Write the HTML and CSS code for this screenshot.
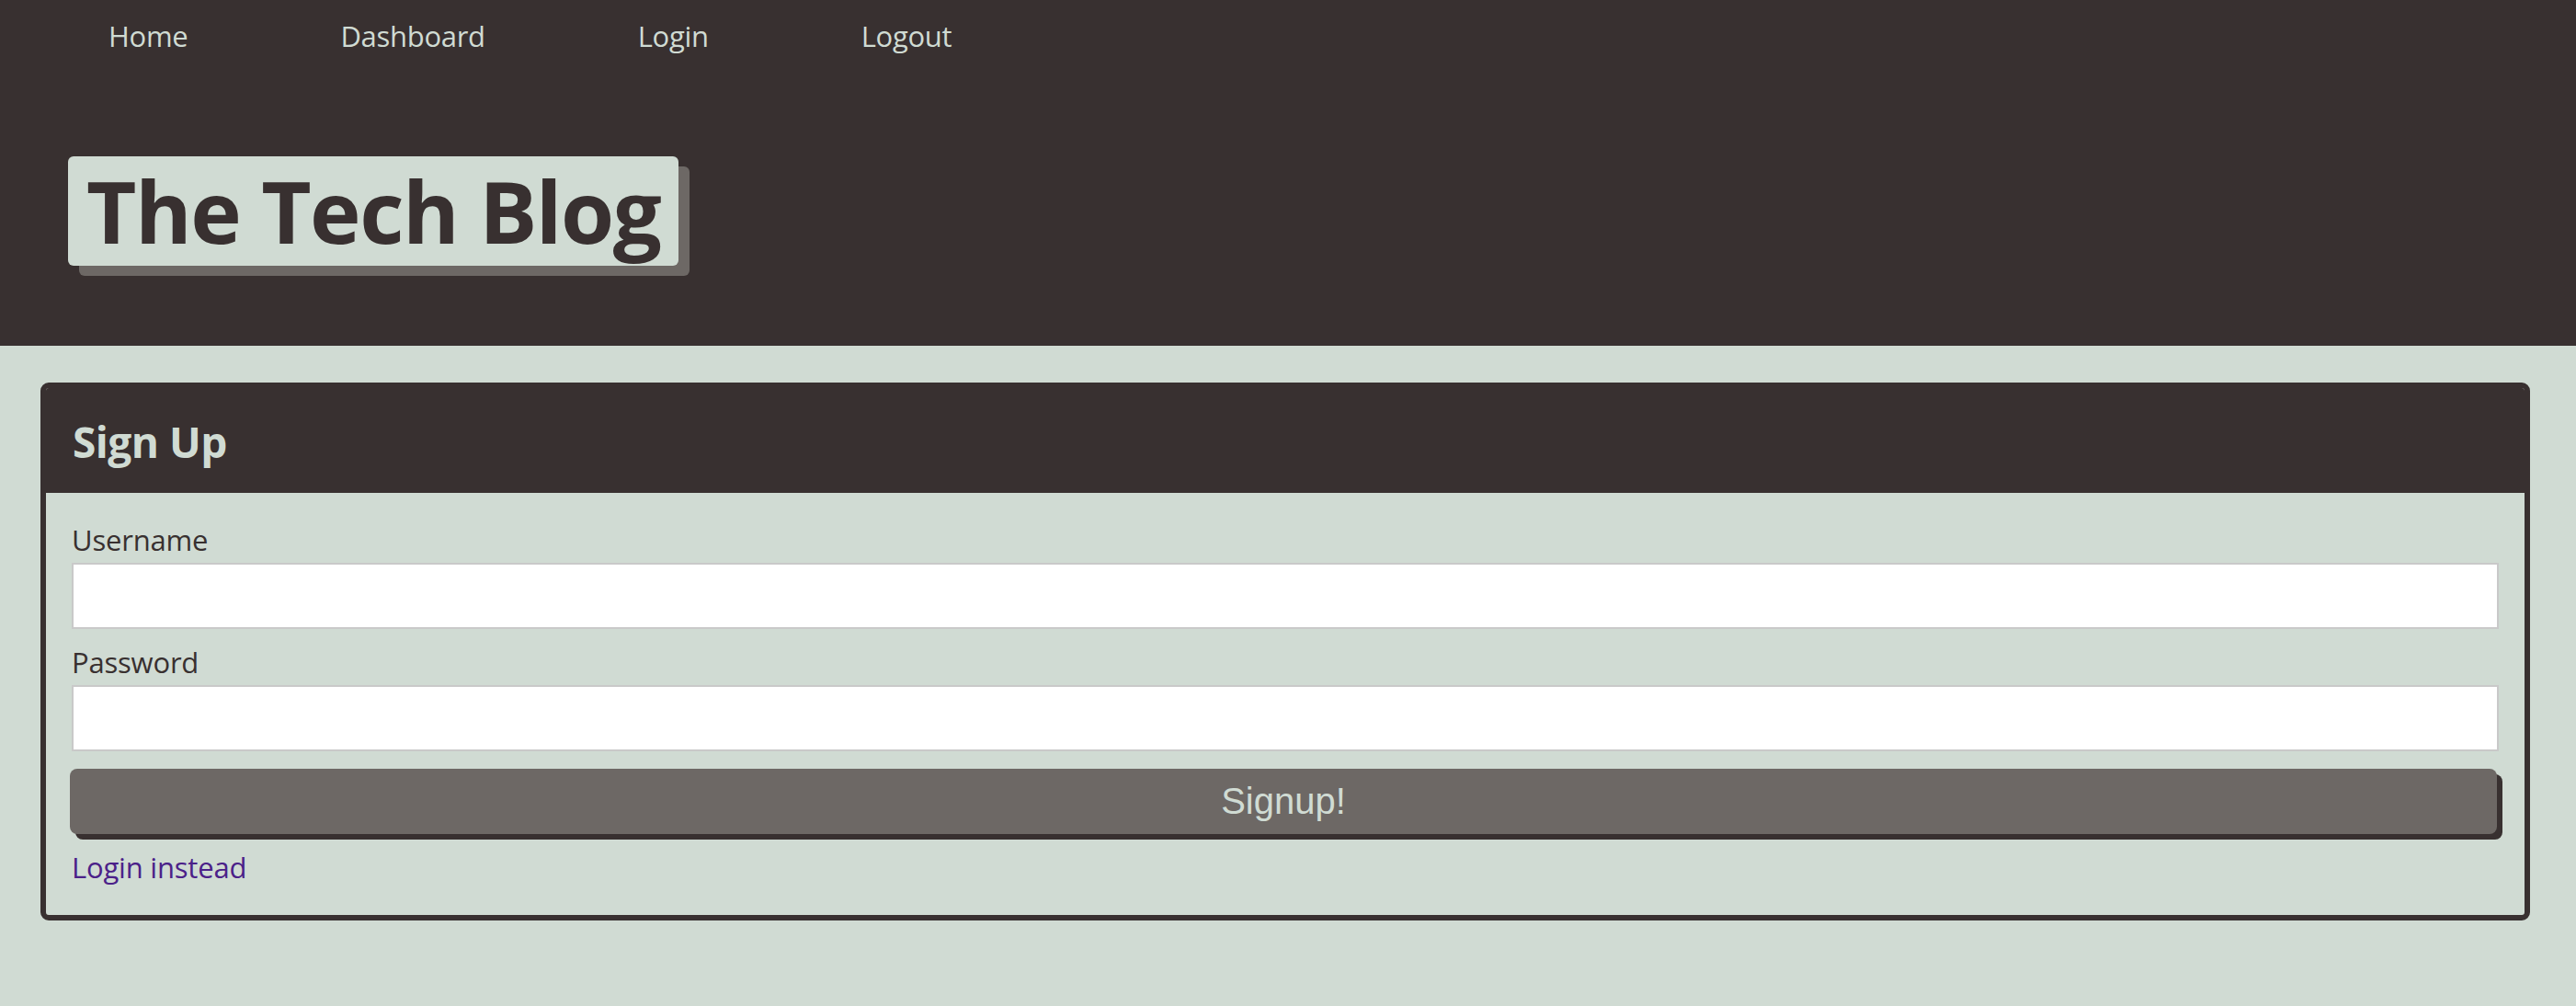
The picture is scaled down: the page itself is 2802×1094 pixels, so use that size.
FILE: index.html
```html
<!DOCTYPE html>
<html lang="en">
<head>
<meta charset="utf-8">
<title>The Tech Blog</title>
<link rel="stylesheet" href="styles.css">
</head>
<body>
<header class="site-header">
  <nav class="nav">
    <a class="nav-link" href="#">Home</a>
    <a class="nav-link" href="#">Dashboard</a>
    <a class="nav-link" href="#">Login</a>
    <a class="nav-link" href="#">Logout</a>
  </nav>
  <div class="brand-row">
    <h1 class="brand">The Tech Blog</h1>
  </div>
</header>
<main class="main">
  <section class="card">
    <div class="card-header">
      <h2 class="card-title">Sign Up</h2>
    </div>
    <form class="card-body">
      <label class="field-label" for="username">Username</label>
      <input class="field-input" id="username" type="text">
      <label class="field-label field-label-next" for="password">Password</label>
      <input class="field-input" id="password" type="password">
      <button class="submit-btn" type="button">Signup!</button>
      <a class="alt-link" href="#">Login instead</a>
    </form>
  </section>
</main>
</body>
</html>
```

FILE: styles.css
```css
* {
  box-sizing: border-box;
}

html, body {
  margin: 0;
  padding: 0;
}

body {
  background: #d0dbd3;
  font-family: "Open Sans", "Noto Sans", sans-serif;
  color: #383030;
  min-height: 1094px;
}

.site-header {
  background: #383030;
  height: 376px;
}

.nav {
  display: flex;
  gap: 166px;
  padding: 17px 0 0 118px;
}

.nav-link {
  color: #d0dbd3;
  text-decoration: none;
  font-size: 31px;
  line-height: 44px;
  letter-spacing: -0.3px;
}

.brand-row {
  padding: 0 0 0 74px;
  margin-top: 109px;
}

.brand {
  display: inline-block;
  margin: 0;
  background: #d0dbd3;
  color: #383030;
  font-size: 94px;
  line-height: 96px;
  font-weight: 700;
  padding: 11px 20px 12px 20px;
  border-radius: 6px;
  box-shadow: 12px 11px 0 #6d6865;
  letter-spacing: -1.5px;
}

.main {
  padding: 40px 50px 0 44px;
}

.card {
  border: 6px solid #383030;
  border-radius: 9px;
  overflow: hidden;
}

.card-header {
  background: #383030;
  padding: 29px 29px 26px 29px;
}

.card-title {
  margin: 0;
  color: #d0dbd3;
  font-size: 46px;
  line-height: 59px;
  font-weight: 700;
  letter-spacing: -0.5px;
}

.card-body {
  display: flex;
  flex-direction: column;
  align-items: stretch;
  padding: 27px 28px 27px 28px;
}

.field-label {
  display: block;
  font-size: 31px;
  line-height: 49px;
  color: #383030;
  letter-spacing: -0.2px;
}

.field-label-next {
  margin-top: 12px;
}

.field-input {
  display: block;
  width: 100%;
  height: 72px;
  margin: 0;
  border: 2px solid #c9c9c9;
  background: #ffffff;
  border-radius: 0;
  font-size: 30px;
}

.submit-btn {
  display: block;
  margin: 19px 2px 0 -2px;
  height: 71px;
  border: none;
  border-radius: 8px;
  background: #6d6865;
  color: #d0dbd3;
  font-family: "Liberation Sans", Arial, sans-serif;
  font-size: 40px;
  box-shadow: 6px 6px 0 #383030;
  padding: 0;
}

.alt-link {
  display: block;
  margin-top: 12px;
  color: #4b2189;
  text-decoration: none;
  font-size: 31px;
  line-height: 49px;
  letter-spacing: -0.2px;
}
```
